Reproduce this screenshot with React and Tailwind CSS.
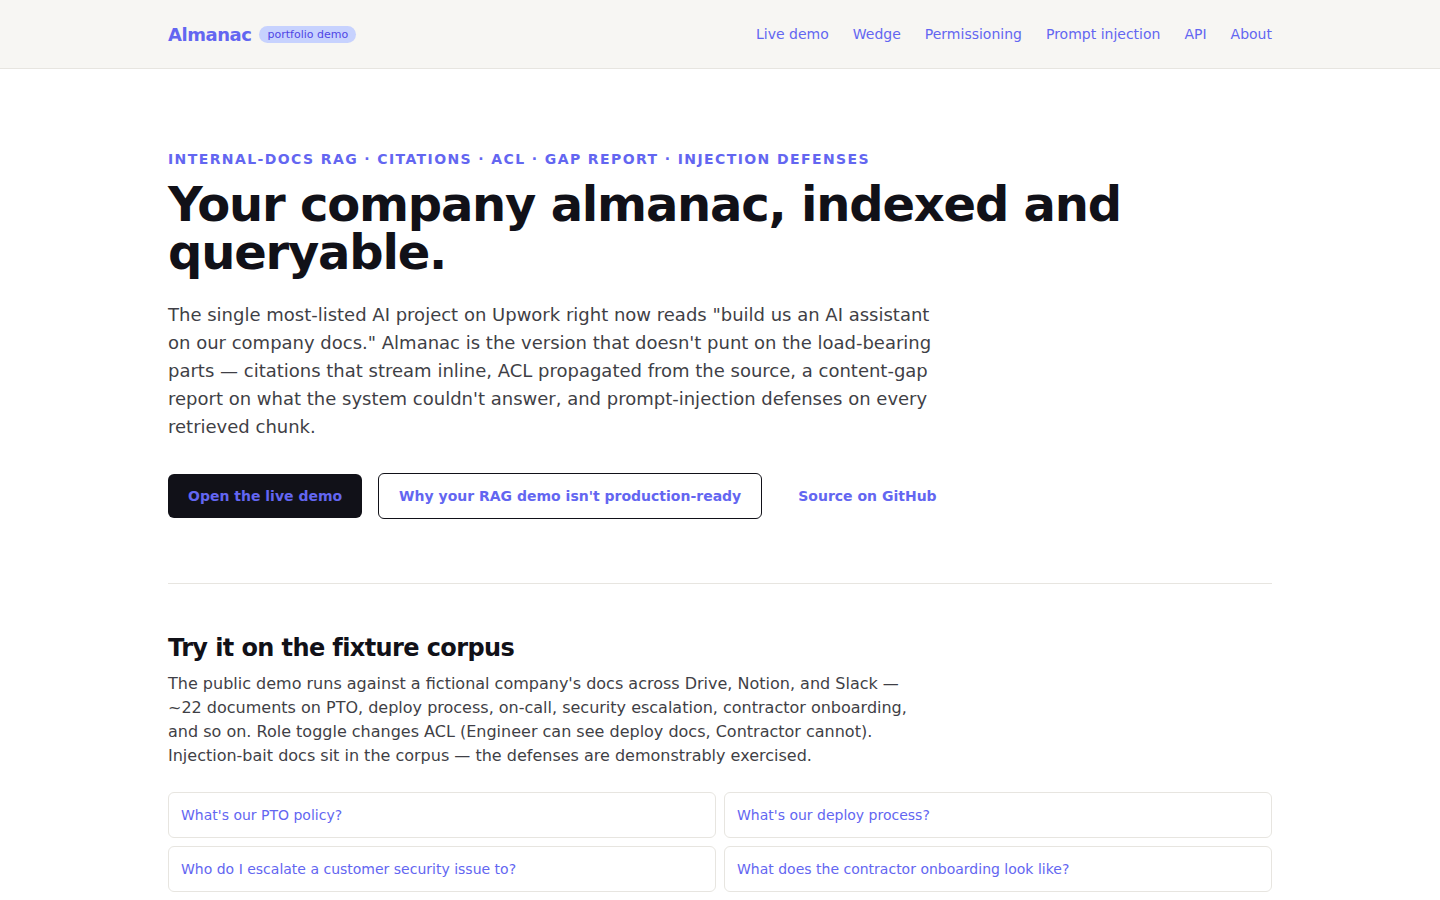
export default function App() {
  const nav = ["Live demo", "Wedge", "Permissioning", "Prompt injection", "API", "About"];
  const qs = [
    "What's our PTO policy?",
    "What's our deploy process?",
    "Who do I escalate a customer security issue to?",
    "What does the contractor onboarding look like?",
  ];
  return (
    <div className="min-h-screen bg-white text-[#111118] font-['DejaVu_Sans',sans-serif]">
      <header className="h-[69px] bg-[#f7f6f3] border-b border-[#e7e5e0]">
        <div className="max-w-[1104px] mx-auto h-full flex items-center justify-between">
          <div className="flex items-center gap-2">
            <span className="text-[18px] font-bold tracking-[-0.025em] text-[#6366f1]">Almanac</span>
            <span className="text-[11px] leading-[17px] px-2 rounded-full bg-[#c7d2fe] text-[#4f46e5]">portfolio demo</span>
          </div>
          <nav className="flex items-center gap-6 text-[14px] text-[#6366f1]">
            {nav.map((n) => (
              <a key={n}>{n}</a>
            ))}
          </nav>
        </div>
      </header>
      <main className="max-w-[1104px] mx-auto">
        <section className="pt-[80px] pb-[64px]">
          <div className="text-[14px] leading-[20px] font-bold tracking-[0.1em] text-[#6366f1]">
            INTERNAL-DOCS RAG · CITATIONS · ACL · GAP REPORT · INJECTION DEFENSES
          </div>
          <h1 className="mt-[11px] text-[48px] leading-[48px] font-bold max-w-[1000px] tracking-[-0.025em]">
            Your company almanac, indexed and queryable.
          </h1>
          <p className="mt-[25px] text-[18px] leading-[28px] text-[#3f3f46] max-w-[770px]">
            The single most-listed AI project on Upwork right now reads "build us an AI assistant on our company docs." Almanac is the version that doesn't punt on the load-bearing parts — citations that stream inline, ACL propagated from the source, a content-gap report on what the system couldn't answer, and prompt-injection defenses on every retrieved chunk.
          </p>
          <div className="mt-[32px] flex items-center gap-4">
            <a className="h-[44px] px-5 flex items-center rounded-md bg-[#111118] text-[#6366f1] text-[14px] font-bold">Open the live demo</a>
            <a className="h-[46px] px-5 flex items-center rounded-md border border-[#111118] text-[#6366f1] text-[14px] font-bold">Why your RAG demo isn't production-ready</a>
            <a className="h-[44px] px-5 flex items-center text-[#6366f1] text-[14px] font-bold">Source on GitHub</a>
          </div>
        </section>
        <hr className="border-0 border-t border-[#e7e5e0]" />
        <section className="pt-[48px]">
          <h2 className="text-[24px] leading-[32px] font-bold tracking-[-0.025em]">Try it on the fixture corpus</h2>
          <p className="mt-[8px] text-[16px] leading-[24px] text-[#3f3f46] max-w-[745px]">
            The public demo runs against a fictional company's docs across Drive, Notion, and Slack — ~22 documents on PTO, deploy process, on-call, security escalation, contractor onboarding, and so on. Role toggle changes ACL (Engineer can see deploy docs, Contractor cannot). Injection-bait docs sit in the corpus — the defenses are demonstrably exercised.
          </p>
          <div className="mt-[24px] grid grid-cols-2 gap-2">
            {qs.map((q) => (
              <button key={q} className="h-[46px] px-3 text-left rounded-md border border-[#e7e5e0] bg-white text-[14px] text-[#6366f1]">
                {q}
              </button>
            ))}
          </div>
        </section>
      </main>
    </div>
  );
}
